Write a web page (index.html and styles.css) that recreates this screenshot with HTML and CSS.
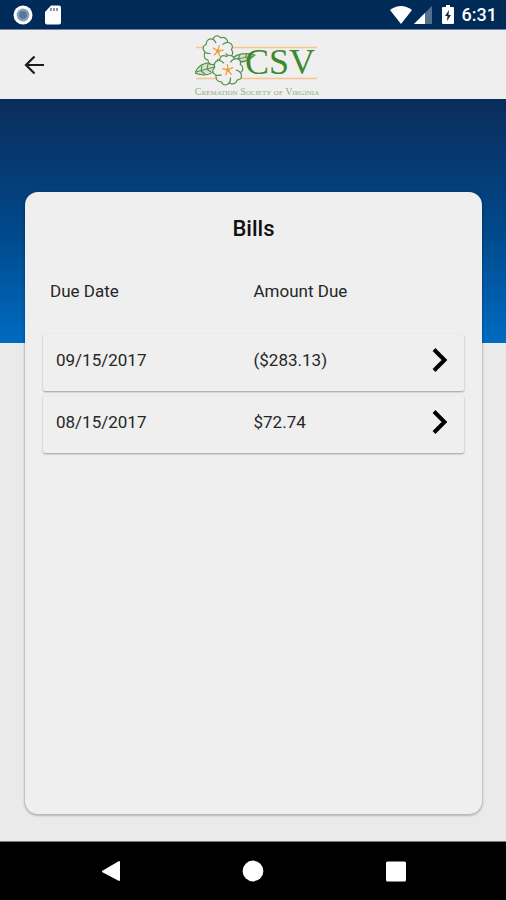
FILE: index.html
```html
<!DOCTYPE html>
<html lang="en">
<head>
<meta charset="utf-8">
<meta name="viewport" content="width=device-width, initial-scale=1">
<title>Bills</title>
<link rel="stylesheet" href="styles.css">
</head>
<body>
<div class="status">
  <div class="status-group">
    <svg width="20" height="20" viewBox="0 0 20 20" aria-hidden="true"><circle cx="10" cy="10" r="9.5" fill="#fff"/><circle cx="10" cy="10" r="6.4" fill="#87a0b8"/><circle cx="10" cy="10" r="4" fill="#56799b"/></svg>
    <svg width="16" height="20" viewBox="0 0 16 20" aria-hidden="true"><path d="M6 .5h8q2 0 2 2v15q0 2-2 2H2q-2 0-2-2V7z" fill="#fff"/><path d="M6 3v3M9 3v3M12 3v3" stroke="#4d6080" stroke-width="1.3"/></svg>
  </div>
  <div class="status-group status-right">
    <svg width="22" height="18" viewBox="0 0 22 18" aria-hidden="true"><path d="M0 4Q11-4 22 4L11 18z" fill="#fff"/></svg>
    <svg width="18" height="18" viewBox="0 0 18 18" aria-hidden="true"><path d="M0 18L18 0V18z" fill="#54708f"/><path d="M0 18L11 7V18z" fill="#fff"/></svg>
    <svg class="battery" width="12" height="19" viewBox="0 0 12 19" aria-hidden="true"><path d="M4 0h4v2h3q1 0 1 1v15q0 1-1 1H1q-1 0-1-1V3q0-1 1-1h3z" fill="#fff"/><path d="M7 5L3 11h2.500L5 16l4-6H6.500z" fill="#002a57"/></svg>
    <time class="clock">6:31</time>
  </div>
</div>
<header class="bar">
  <button class="back" aria-label="Back">
    <svg width="20" height="20" viewBox="0 0 20 20" fill="none" stroke="#1b1b1b" stroke-width="2.200" aria-hidden="true"><path d="M10.500 1.500L2 10l8.500 8.500M2 10h18"/></svg>
  </button>
  <svg class="logo" width="124" height="64" viewBox="0 0 124 64" role="img" aria-label="CSV Cremation Society of Virginia">
    <defs>
      <path id="petal" d="M0 0C-5-3-9-8-7-12S-2-15 0-13.500C2-15 5-15 7-12S5-3 0 0z"/>
      <g id="flower">
        <use href="#petal"/><use href="#petal" transform="rotate(72)"/><use href="#petal" transform="rotate(144)"/><use href="#petal" transform="rotate(216)"/><use href="#petal" transform="rotate(288)"/>
        <circle r="8" stroke="none"/>
        <path d="M0 0V-6M0 0L5.500-2M0 0L3 5M0 0L-3 5M0 0L-5.500-2" stroke="#f0a040" stroke-width="1.300"/>
        <circle r="2" fill="#f0a040" stroke="none"/>
      </g>
    </defs>
    <path d="M1 14.500h121M1 45.500h121" stroke="#f7c48a" stroke-width="1.600"/>
    <g fill="#f0f0f0" stroke="#5a9150" stroke-width="1.200" stroke-linejoin="round">
      <path fill="#d7e5d0" d="M0 40Q4 29 18 30l3 6q-7 9-21 4z"/>
      <path d="M1 39l18-5M6 38l1-5M6 38l4 3M12 36l1-5M12 36l4 3"/>
      <path fill="#d7e5d0" d="M36 26q10-8 24-4-8 8-23 8z"/>
      <path d="M37 27l21-4M43 26l2-4M43 26l4 3M50 24l2-3M50 24l4 2"/>
      <use href="#flower" transform="translate(23 18) rotate(12)"/>
      <use href="#flower" transform="translate(33 37) rotate(-6)"/>
    </g>
    <text class="logo-name" x="50" y="41">CSV</text>
    <text class="logo-caption" x="62" y="62" text-anchor="middle">Cremation Society of Virginia</text>
  </svg>
</header>
<main class="page">
  <section class="card">
    <h1>Bills</h1>
    <table>
      <thead><tr><th scope="col">Due Date</th><th scope="col">Amount Due</th><th class="action"></th></tr></thead>
      <tbody>
        <tr><td>09/15/2017</td><td>($283.13)</td><td class="action"><button class="open" aria-label="Open bill 09/15/2017"><svg width="16" height="24" viewBox="0 0 16 24" fill="none" stroke="#000" stroke-width="4" aria-hidden="true"><path d="M2 1.500L12.500 12 2 22.500"/></svg></button></td></tr>
        <tr><td>08/15/2017</td><td>$72.74</td><td class="action"><button class="open" aria-label="Open bill 08/15/2017"><svg width="16" height="24" viewBox="0 0 16 24" fill="none" stroke="#000" stroke-width="4" aria-hidden="true"><path d="M2 1.500L12.500 12 2 22.500"/></svg></button></td></tr>
      </tbody>
    </table>
  </section>
</main>
<nav class="nav" aria-label="System">
  <button aria-label="Back"><svg width="22" height="22" viewBox="0 0 22 22" fill="#fff" aria-hidden="true"><path d="M3 11L20 1q1 0 1 1v18q0 1-1 1L3 12z"/></svg></button>
  <button aria-label="Home"><svg width="22" height="22" viewBox="0 0 22 22" fill="#fff" aria-hidden="true"><circle cx="11" cy="11" r="10.400"/></svg></button>
  <button aria-label="Recent apps"><svg width="22" height="22" viewBox="0 0 22 22" fill="#fff" aria-hidden="true"><rect x="1" y="1.500" width="20" height="20" rx="1.500"/></svg></button>
</nav>
</body>
</html>
```

FILE: styles.css
```css
* { box-sizing: border-box; }

body {
  margin: 0;
  min-height: 100vh;
  display: flex;
  flex-direction: column;
  background: #eaeaea;
  color: #262626;
  font-family: Roboto, "Liberation Sans", sans-serif;
}

button {
  display: inline-flex;
  padding: 0;
  border: 0;
  background: none;
  cursor: pointer;
}

.status {
  height: 30px;
  padding: 0 9px 0 13px;
  display: flex;
  align-items: center;
  justify-content: space-between;
  background: #002a57;
  border-bottom: 1px solid #7380a0;
}

.status-group {
  display: flex;
  align-items: center;
  gap: 12px;
}

.status-right { gap: 2px; }
.battery { margin: 0 6px 0 8px; }

.clock {
  color: #fff;
  font-size: 18px;
  font-weight: 500;
  line-height: 20px;
}

.bar {
  height: 69px;
  padding: 0 24px;
  display: grid;
  grid-template-columns: 1fr auto 1fr;
  align-items: center;
  background: #efefef;
}

.back { justify-self: start; }
.logo { margin-left: 8px; }

.logo-name {
  fill: #3c8a2c;
  font: 36px "Liberation Serif", serif;
}

.logo-caption {
  fill: #8fae88;
  font: small-caps 10px "Liberation Serif", serif;
}

.page {
  flex: 1;
  display: flex;
  padding: 93px 24px 27px 25px;
  background: linear-gradient(#0b2c5b, #00498b 55%, #006bc1) top / 100% 244px no-repeat;
}

.card {
  flex: 1;
  padding: 25px 18px 24px;
  background: #efefef;
  border-radius: 13px;
  box-shadow: 0 1px 2px 1px rgba(0, 0, 0, 0.22);
}

h1 {
  margin: 0 0 7px;
  color: #111;
  font-size: 22px;
  font-weight: 500;
  line-height: 24px;
  text-align: center;
}

table {
  width: 100%;
  table-layout: fixed;
  border-collapse: separate;
  border-spacing: 0 5px;
  font-size: 17px;
  line-height: 20px;
}

th, td {
  padding: 0;
  font-weight: 400;
  text-align: left;
}

th { height: 76px; }
td { height: 57px; padding-bottom: 6px; }
th:first-child { width: 50%; padding-left: 7px; }
td:first-child { padding-left: 13px; }

tbody tr {
  border-radius: 2px;
  box-shadow: 0 1px 2px rgba(0, 0, 0, 0.35);
}

.action {
  width: 48px;
  padding-right: 16px;
  text-align: right;
}

.open { vertical-align: middle; }

.nav {
  height: 59px;
  padding: 0 39px;
  display: grid;
  grid-template-columns: repeat(3, 1fr);
  align-items: center;
  justify-items: center;
  background: #000;
  border-top: 1px solid #777;
}
```
